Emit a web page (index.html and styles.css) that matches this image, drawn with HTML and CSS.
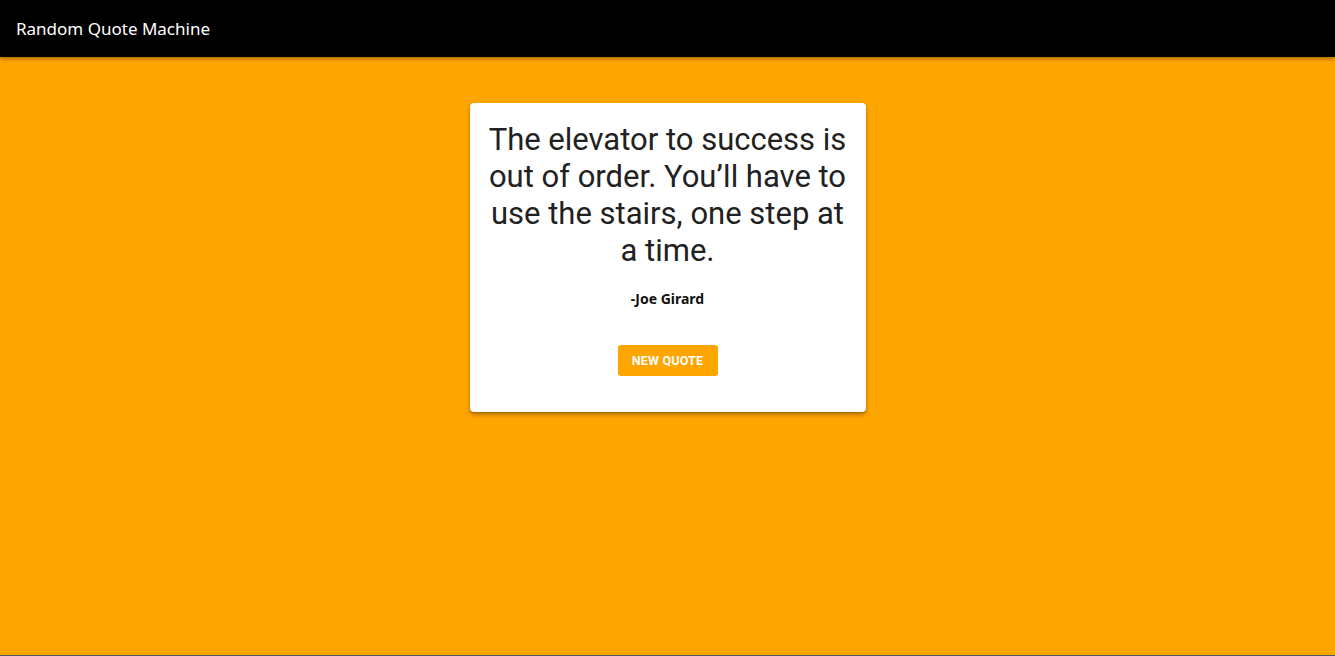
FILE: index.html
```html
<!DOCTYPE html>
<html>
<head>
<meta charset="utf-8">
<link rel="stylesheet" href="styles.css">
</head>
<body>
<header class="appbar">
  <div class="appbar-title">Random Quote Machine</div>
</header>
<main class="stage">
  <div class="card" id="quote-box">
    <p class="quote" id="text">The elevator to success is out of order. You’ll have to use the stairs, one step at a time.</p>
    <p class="author" id="author">-Joe Girard</p>
    <button class="btn" id="new-quote">NEW QUOTE</button>
  </div>
</main>
</body>
</html>
```
FILE: styles.css
```css
html, body {
  margin: 0;
  padding: 0;
  height: 100%;
}
body {
  background: #555;
  font-family: "Open Sans", "Noto Sans", sans-serif;
}
.appbar {
  height: 57px;
  background: #000;
  display: flex;
  align-items: center;
  padding: 0 16px;
  box-shadow: 0 2px 4px rgba(0,0,0,0.35);
  position: relative;
  z-index: 1;
}
.appbar-title {
  color: #fff;
  font-family: "Noto Sans", "Open Sans", sans-serif;
  font-size: 17px;
}
.stage {
  background: #FFA500;
  height: 598px;
  display: flex;
  justify-content: center;
  align-items: flex-start;
  padding-top: 46px;
  box-sizing: border-box;
}
.card {
  width: 396px;
  box-sizing: border-box;
  background: #fff;
  border-radius: 4px;
  box-shadow: 0 3px 4px rgba(0,0,0,0.25), 0 1px 2px rgba(0,0,0,0.2);
  padding: 18px 16px 36px;
  display: flex;
  flex-direction: column;
  align-items: center;
  text-align: center;
}
.quote {
  margin: 0;
  font-family: Roboto, sans-serif;
  font-size: 31px;
  line-height: 37px;
  color: #212121;
}
.author {
  margin: 21px 0 0;
  font-family: "Noto Sans", "Open Sans", sans-serif;
  font-weight: 700;
  font-size: 14px;
  line-height: 18px;
  color: #111;
}
.btn {
  margin-top: 37px;
  width: 100px;
  height: 31px;
  border: none;
  border-radius: 3px;
  background: #FFA500;
  color: #fff;
  font-family: Roboto, sans-serif;
  font-weight: 700;
  font-size: 12.5px;
  letter-spacing: 0.2px;
  padding: 0;
}
```
